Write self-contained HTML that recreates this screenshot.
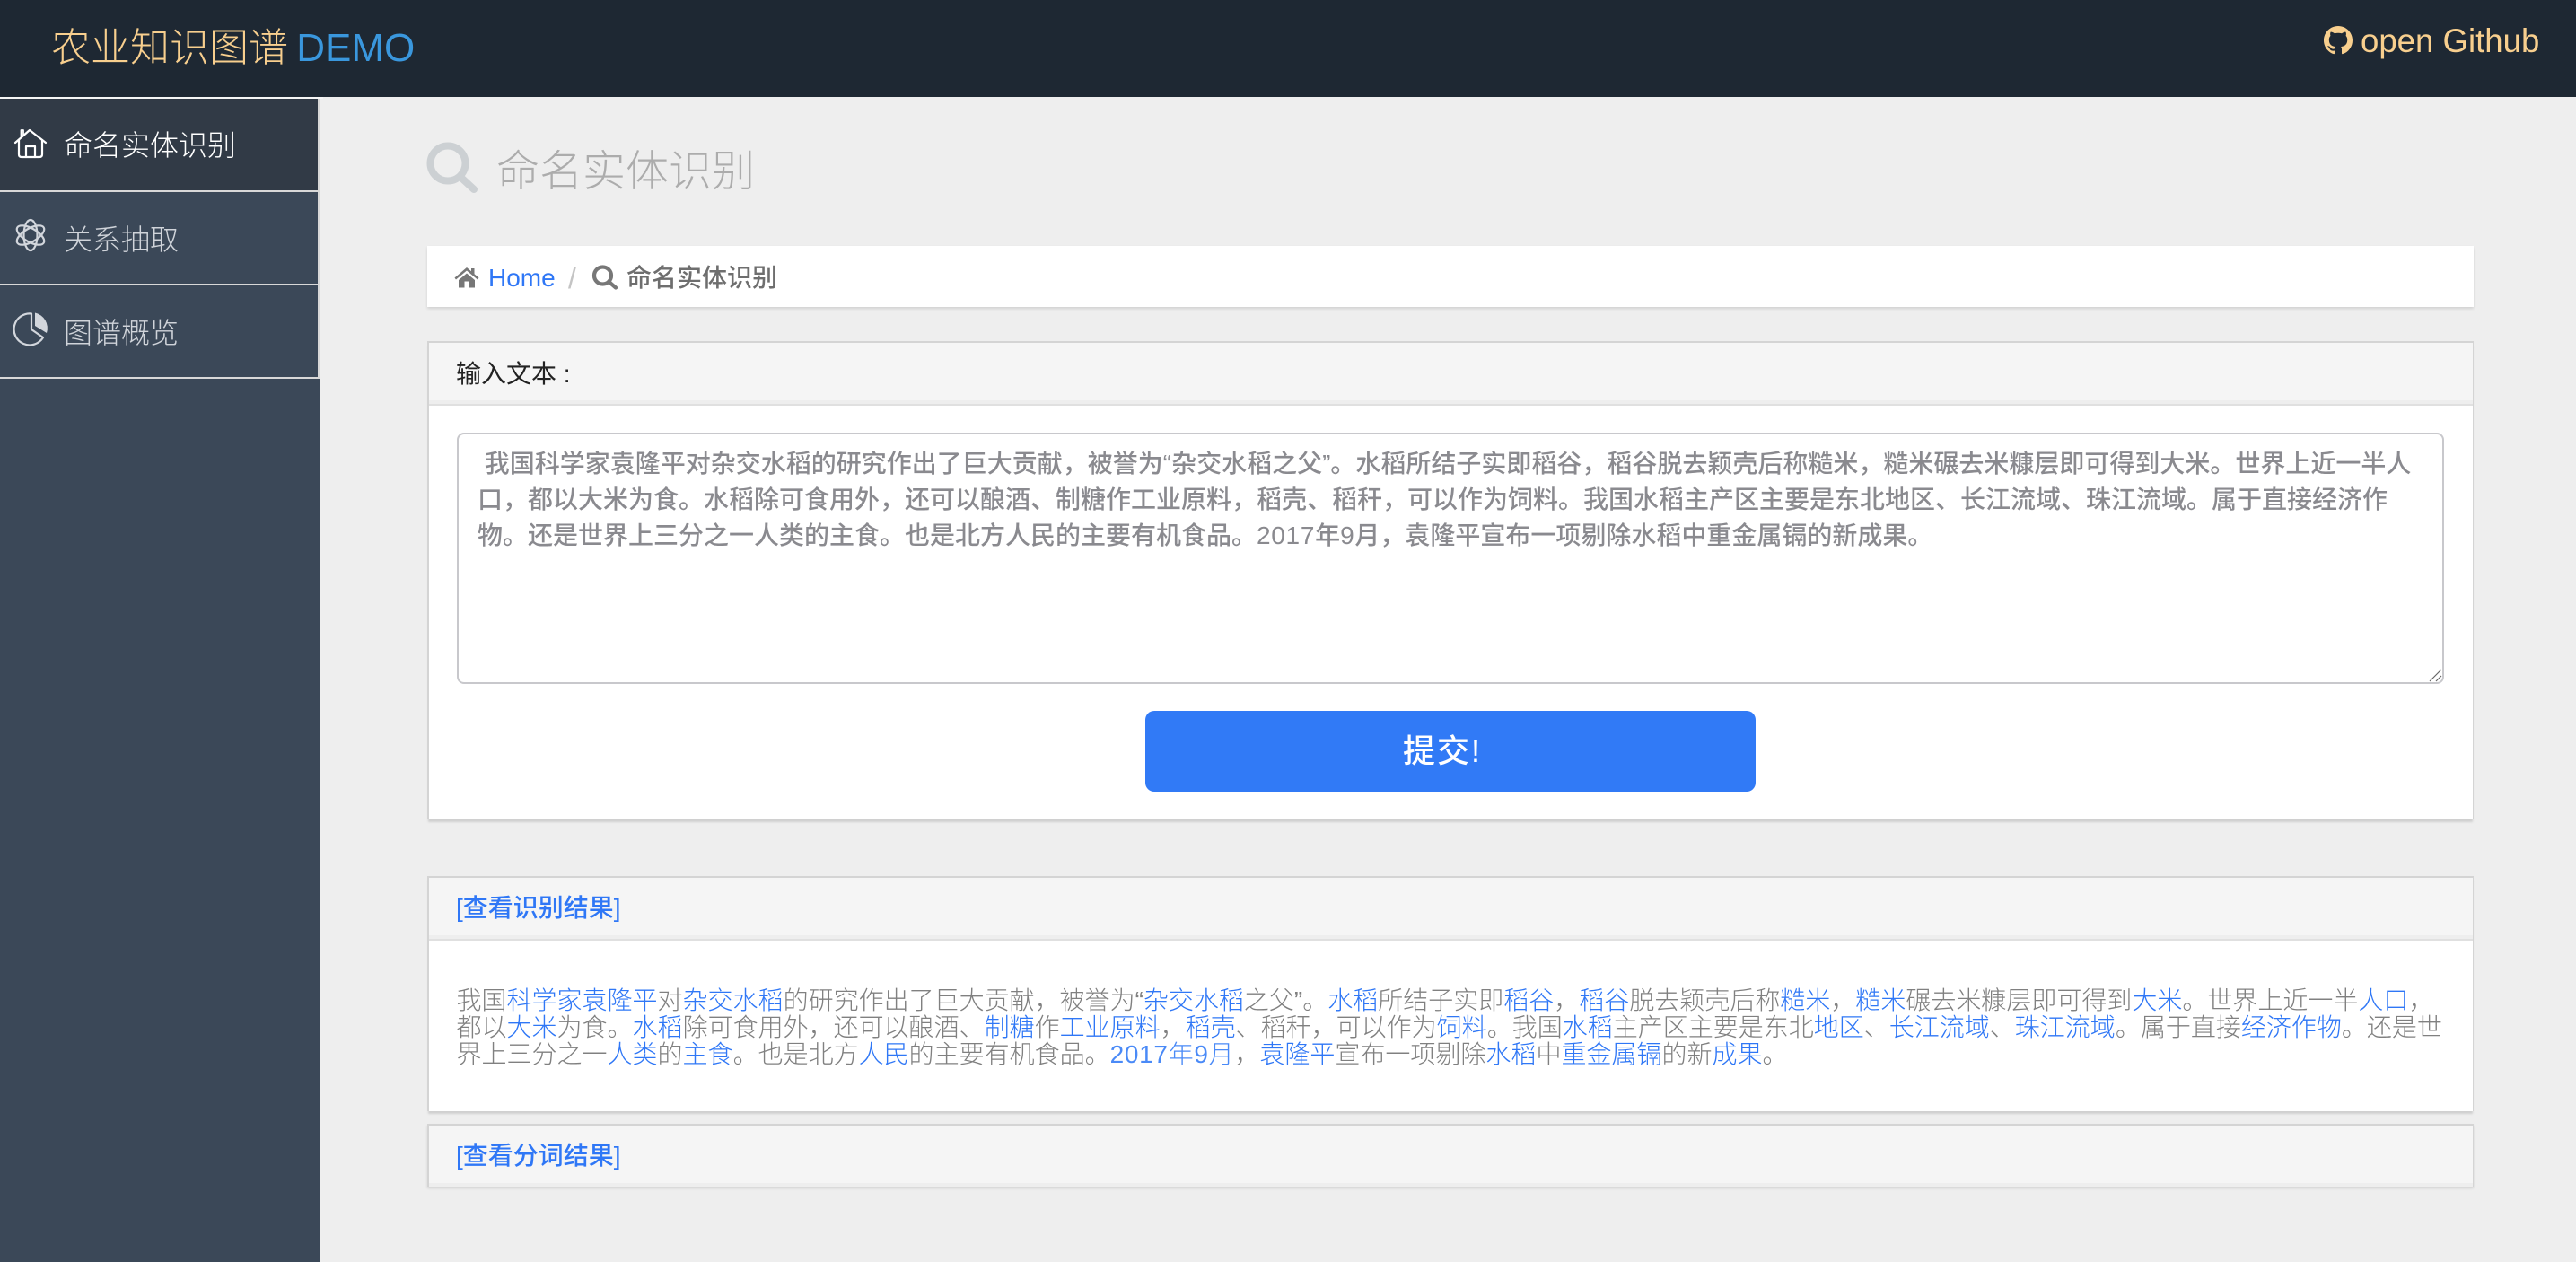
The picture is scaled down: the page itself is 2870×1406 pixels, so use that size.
<!DOCTYPE html>
<html lang="zh-CN">
<head>
<meta charset="utf-8">
<title>农业知识图谱 DEMO</title>
<style>
html,body{margin:0;padding:0;width:2870px;height:1406px;overflow:hidden;background:#eeeeee;}
body{position:relative;font-family:"Liberation Sans","Noto Sans CJK SC",sans-serif;font-size:28px;}
.a{position:absolute;display:block;box-sizing:border-box;}
.t{position:absolute;white-space:nowrap;line-height:40px;height:40px;}
a{color:#2f77f6;text-decoration:none;}
.panel{position:absolute;left:476px;width:2280px;box-sizing:border-box;background:#fff;border:solid #d4d4d4;border-width:2px 1px 0 2px;}
.head{position:absolute;left:0;right:0;top:0;height:70px;background:#f5f5f5;border-bottom:2px solid #e0e0e0;box-sizing:border-box;}
.head:before{content:"";position:absolute;left:0;right:0;bottom:0;height:4px;background:#eeeeee;}
.line{font-weight:300;color:#808080;}
.ta{color:#8a8a8f;font-weight:500;}
.num{letter-spacing:.7px;}
.line a.num{color:#4a8af7;}
</style>
</head>
<body>
<!-- top bar -->
<div class="a" style="left:0;top:0;width:2870px;height:108px;background:#1e2833;"></div>
<div class="t" style="left:57px;top:28px;height:52px;line-height:52px;font-size:44px;font-weight:300;color:#f8cf8e;">农业知识图谱 <span style="color:#3a97dd;margin-left:-3px;">DEMO</span></div>
<svg class="a" style="left:2589px;top:29px;" width="32" height="32" viewBox="0 0 16 16"><path fill="#f8cf8e" d="M8 0C3.58 0 0 3.58 0 8c0 3.54 2.29 6.53 5.47 7.59.4.07.55-.17.55-.38 0-.19-.01-.82-.01-1.49-2.01.37-2.53-.49-2.69-.94-.09-.23-.48-.94-.82-1.13-.28-.15-.68-.52-.01-.53.63-.01 1.08.58 1.23.82.72 1.21 1.87.87 2.33.66.07-.52.28-.87.51-1.07-1.78-.2-3.64-.89-3.64-3.95 0-.87.31-1.59.82-2.15-.08-.2-.36-1.02.08-2.12 0 0 .67-.21 2.2.82.64-.18 1.32-.27 2-.27.68 0 1.36.09 2 .27 1.53-1.04 2.2-.82 2.2-.82.44 1.1.16 1.92.08 2.12.51.56.82 1.27.82 2.15 0 3.07-1.87 3.75-3.65 3.95.29.25.54.73.54 1.48 0 1.07-.01 1.93-.01 2.2 0 .21.15.46.55.38A8.013 8.013 0 0016 8c0-4.42-3.58-8-8-8z"/></svg>
<div class="t" style="left:2630px;top:26px;font-size:36.600px;color:#f8cf8e;">open Github</div>

<!-- sidebar -->
<div class="a" style="left:0;top:108px;width:356px;height:1298px;background:#3b4858;"></div>
<div class="a" style="left:0;top:108px;width:360px;height:2px;background:#f5f5f5;"></div>
<div class="a" style="left:0;top:110px;width:354px;height:102px;background:#313a46;"></div>
<div class="a" style="left:354px;top:110px;width:2px;height:312px;background:#d8d8d8;"></div>
<div class="a" style="left:0;top:212px;width:355px;height:2px;background:#d8d8d8;"></div>
<div class="a" style="left:0;top:316px;width:355px;height:2px;background:#d8d8d8;"></div>
<div class="a" style="left:0;top:420px;width:356px;height:2px;background:#d8d8d8;"></div>
<svg class="a" style="left:0;top:130px;" width="70" height="60" viewBox="0 0 70 60" fill="none" stroke="#ffffff" stroke-width="2.2" stroke-linecap="round" stroke-linejoin="round"><path d="M17 29 33 15 51 29"/><path d="M21 26V42q0 3 3 3H44q3 0 3-3V26"/><path d="M29 45V33H39V45"/><path d="M23.500 22V15H26V20" stroke-width="1.800"/></svg>
<svg class="a" style="left:0;top:235px;" width="70" height="60" viewBox="0 0 70 60" fill="none" stroke="#d2d6dc" stroke-width="2.200"><ellipse cx="34" cy="27" rx="7.500" ry="17"/><ellipse cx="34" cy="27" rx="7.500" ry="17" transform="rotate(60 34 27)"/><ellipse cx="34" cy="27" rx="7.500" ry="17" transform="rotate(-60 34 27)"/></svg>
<svg class="a" style="left:2px;top:340px;" width="70" height="60" viewBox="0 0 70 60"><path d="M37 8.500A17.500 17.500 0 0 1 50 31L37 23Z" fill="#d2d6dc"/><path d="M33 9.500A17.500 17.500 0 1 0 46 36L33 27Z" fill="none" stroke="#d2d6dc" stroke-width="2.200" stroke-linejoin="round"/></svg>
<div class="t" style="left:71px;top:142px;font-size:32px;font-weight:300;color:#fff;">命名实体识别</div>
<div class="t" style="left:71px;top:247px;font-size:32px;font-weight:300;color:#d0d4da;">关系抽取</div>
<div class="t" style="left:71px;top:351px;font-size:32px;font-weight:300;color:#d0d4da;">图谱概览</div>

<!-- page title -->
<svg class="a" style="left:470px;top:150px;" width="80" height="80" viewBox="0 0 80 80" fill="none" stroke="#ccd0d3" stroke-width="8" stroke-linecap="round"><circle cx="29" cy="32" r="19.500"/><path d="M45 49 58 61"/></svg>
<div class="t" style="left:553px;top:168px;height:48px;line-height:48px;font-size:48px;font-weight:300;color:#acacac;">命名实体识别</div>

<!-- breadcrumb -->
<div class="a" style="left:476px;top:274px;width:2280px;height:68px;background:#fff;box-shadow:0 2px 3px rgba(0,0,0,.12);"></div>
<svg class="a" style="left:506px;top:297px;" width="28" height="24" viewBox="0 0 28 24"><path fill="#777" d="M14 1 0.500 12.500 2 14.500 14 4.500 26 14.500 27.500 12.500 22.500 8.200V2H19V5.200ZM5 15V23.500H11.500V16.500H16.500V23.500H23V15L14 7.500Z"/></svg>
<div class="t" style="left:544px;top:290px;color:#2f77f6;">Home</div>
<div class="t" style="left:633px;top:290px;font-size:32px;color:#c4c4c4;font-weight:300;">/</div>
<svg class="a" style="left:655px;top:291px;" width="40" height="36" viewBox="0 0 40 36" fill="none" stroke="#777" stroke-width="4.200" stroke-linecap="round"><circle cx="16.500" cy="16" r="9.500"/><path d="M24 23.500 31 29.500"/></svg>
<div class="t" style="left:698px;top:290px;color:#6e6e6e;font-weight:500;">命名实体识别</div>

<!-- panel 1 -->
<div class="panel" style="top:380px;height:532px;box-shadow:0 5px 2px -1px #d0d0d0;">
  <div class="head"></div>
</div>
<div class="t" style="left:508px;top:397px;color:#222;">输入文本 :</div>
<div class="a" style="left:509px;top:482px;width:2214px;height:280px;border:2px solid #c8c8cc;border-radius:8px;background:#fff;"></div>
<div class="t ta" style="left:532px;top:497px;">&nbsp;我国科学家袁隆平对杂交水稻的研究作出了巨大贡献，被誉为“杂交水稻之父”。水稻所结子实即稻谷，稻谷脱去颖壳后称糙米，糙米碾去米糠层即可得到大米。世界上近一半人</div>
<div class="t ta" style="left:532px;top:537px;">口，都以大米为食。水稻除可食用外，还可以酿酒、制糖作工业原料，稻壳、稻秆，可以作为饲料。我国水稻主产区主要是东北地区、长江流域、珠江流域。属于直接经济作</div>
<div class="t ta" style="left:532px;top:577px;">物。还是世界上三分之一人类的主食。也是北方人民的主要有机食品。<span class="num">2017</span>年<span class="num">9</span>月，袁隆平宣布一项剔除水稻中重金属镉的新成果。</div>
<svg class="a" style="left:2705px;top:744px;" width="18" height="18" viewBox="0 0 18 18" stroke="#666" stroke-width="1.200"><path d="M2 15 15 2M9 15 15 9"/></svg>
<div class="a" style="left:1276px;top:792px;width:680px;height:90px;background:#317af6;border-radius:10px;"></div>
<div class="t" style="left:1563px;top:817px;font-size:36px;font-weight:500;color:#fff;letter-spacing:2px;">提交!</div>

<!-- panel 2 -->
<div class="panel" style="top:976px;height:262px;box-shadow:0 4px 2px -1px #d0d0d0;">
  <div class="head"></div>
</div>
<div class="t" style="left:508px;top:992px;font-weight:500;"><a href="#">[查看识别结果]</a></div>
<div class="t line" style="left:508.500px;top:1095px;">我国<a href="#">科学家袁隆平</a>对<a href="#">杂交水稻</a>的研究作出了巨大贡献，被誉为“<a href="#">杂交水稻</a>之父”。<a href="#">水稻</a>所结子实即<a href="#">稻谷</a>，<a href="#">稻谷</a>脱去颖壳后称<a href="#">糙米</a>，<a href="#">糙米</a>碾去米糠层即可得到<a href="#">大米</a>。世界上近一半<a href="#">人口</a>，</div>
<div class="t line" style="left:508.500px;top:1125px;">都以<a href="#">大米</a>为食。<a href="#">水稻</a>除可食用外，还可以酿酒、<a href="#">制糖</a>作<a href="#">工业原料</a>，<a href="#">稻壳</a>、稻秆，可以作为<a href="#">饲料</a>。我国<a href="#">水稻</a>主产区主要是东北<a href="#">地区</a>、<a href="#">长江流域</a>、<a href="#">珠江流域</a>。属于直接<a href="#">经济作物</a>。还是世</div>
<div class="t line" style="left:508.500px;top:1155px;">界上三分之一<a href="#">人类</a>的<a href="#">主食</a>。也是北方<a href="#">人民</a>的主要有机食品。<a class="num" href="#">2017年9月</a>，<a href="#">袁隆平</a>宣布一项剔除<a href="#">水稻</a>中<a href="#">重金属镉</a>的新<a href="#">成果</a>。</div>

<!-- panel 3 -->
<div class="panel" style="top:1252px;height:70px;box-shadow:0 2px 3px rgba(0,0,0,.1);">
  <div class="head" style="height:68px;border-bottom:0;"></div>
</div>
<div class="t" style="left:508px;top:1268px;font-weight:500;"><a href="#">[查看分词结果]</a></div>
</body>
</html>
